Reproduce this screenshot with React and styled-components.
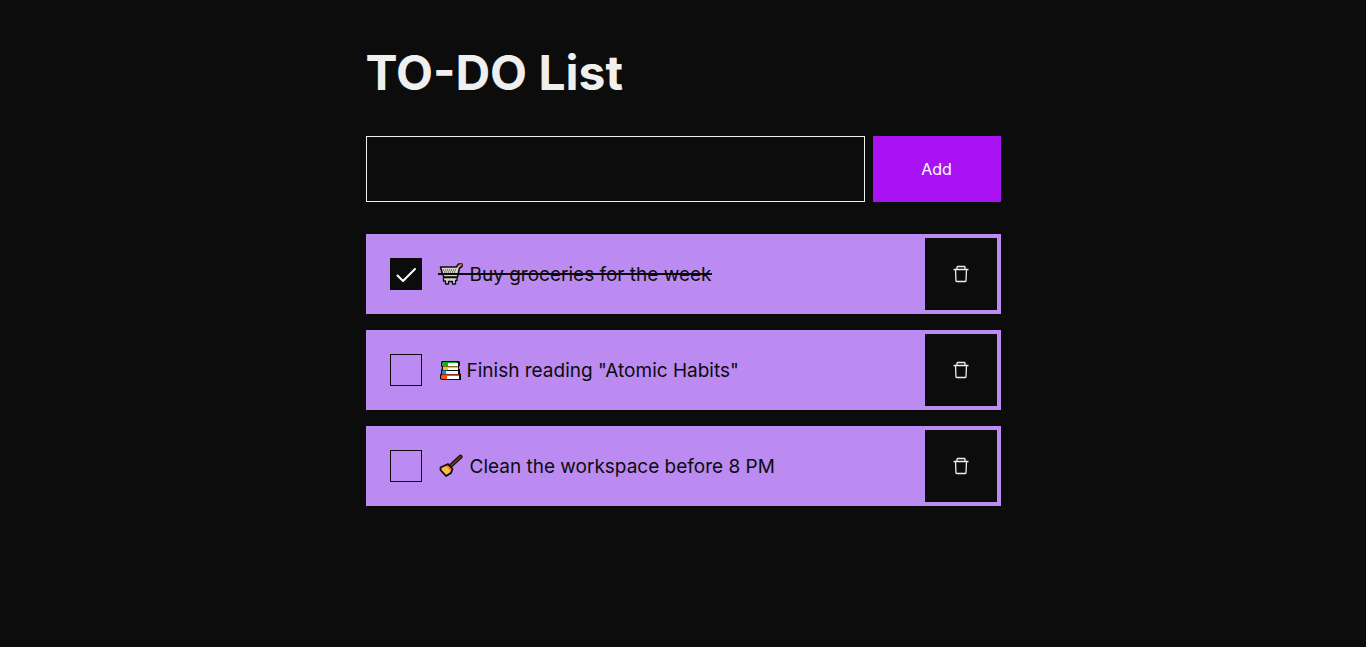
import React, { useState } from "react";
import styled, { createGlobalStyle } from "styled-components";

const GlobalStyle = createGlobalStyle`
  *, *::before, *::after { box-sizing: border-box; }
  body {
    margin: 0;
    background: #0c0c0c;
    color: #efefef;
    font-family: Inter, "Liberation Sans", sans-serif;
  }
  button, input { font: inherit; }
`;

const Page = styled.main`
  width: 100%;
  max-width: 635px;
  margin: 0 auto;
  padding: 43px 0 32px;
`;

const Title = styled.h1`
  margin: 0 0 33px;
  font-size: 48px;
  line-height: 60px;
  font-weight: 700;
`;

const AddForm = styled.form`
  display: flex;
  gap: 8px;
  margin-bottom: 32px;
`;

const TextField = styled.input`
  flex: 1;
  min-width: 0;
  height: 66px;
  padding: 0 24px;
  border: 1px solid #efefef;
  border-radius: 0;
  background: transparent;
  color: #efefef;
  font-size: 19px;
`;

const AddButton = styled.button`
  width: 128px;
  border: 0;
  background: #a913f3;
  color: #ffffff;
  font-size: 16px;
  cursor: pointer;
`;

const List = styled.ul`
  display: flex;
  flex-direction: column;
  gap: 16px;
  margin: 0;
  padding: 0;
  list-style: none;
`;

const Item = styled.li`
  display: flex;
  align-items: center;
  padding: 4px 4px 4px 24px;
  background: #bb8bf1;
  color: #0c0c0c;
`;

const TaskLabel = styled.label`
  flex: 1;
  display: flex;
  align-items: center;
  gap: 16px;
  cursor: pointer;
`;

const CheckWrap = styled.span`
  display: grid;
  width: 32px;
  height: 32px;
  > * { grid-area: 1 / 1; }
`;

const Checkbox = styled.input`
  appearance: none;
  width: 32px;
  height: 32px;
  margin: 0;
  border: 1px solid #0c0c0c;
  cursor: pointer;
  &:checked { background: #0c0c0c; }
`;

const CheckMark = styled.svg`
  width: 32px;
  height: 32px;
  pointer-events: none;
`;

const TaskText = styled.span`
  position: relative;
  display: flex;
  align-items: center;
  gap: 4px;
  font-size: 19px;
  line-height: 25px;
  &::after {
    content: "";
    display: ${(p) => (p.$done ? "block" : "none")};
    position: absolute;
    top: 11px;
    left: 0;
    right: 0;
    height: 2px;
    background: #0c0c0c;
  }
`;

const Pictogram = styled.svg`
  flex: none;
  width: ${(p) => p.$width}px;
  height: 24px;
`;

const DeleteButton = styled.button`
  display: grid;
  place-items: center;
  width: 72px;
  height: 72px;
  padding: 0;
  border: 0;
  background: #0c0c0c;
  color: #efefef;
  cursor: pointer;
`;

const Cart = () => (
  <Pictogram $width={28} viewBox="0 0 28 24" aria-hidden="true">
    <path d="M2.5 5H18.5L20.5 2H24V4.5L21.5 6L19.5 15H6L4.5 12Z" fill="#d8d4cc" stroke="#0c0c0c" strokeWidth="1.6" strokeLinejoin="round" />
    <path d="M5 8H18M6 10H17" stroke="#333" strokeWidth="1" strokeDasharray="1 1" />
    <path d="M5.5 15.5H19V18.5H17.5V22H14.5V19.5H10.5V22H7.5V19H5.5Z" fill="#d8d4cc" stroke="#0c0c0c" strokeWidth="1.3" strokeLinejoin="round" />
    <path d="M21.5 3.5L23 3" stroke="#ff4b3e" strokeWidth="2" strokeLinecap="round" />
  </Pictogram>
);

const Books = () => (
  <Pictogram $width={25} viewBox="0 0 25 24" aria-hidden="true">
    <path d="M4 3H21L22 4V8H21V11H22V15L23 16V22H4L2 21V17L3 15V12L4 10L3 8V4Z" fill="#0c0c0c" />
    <path d="M5 4H19V5H10V8H4V5Z" fill="#12b31c" />
    <path d="M10 5H20V8H10Z" fill="#ffffff" />
    <path d="M5 8.5H20V10H10V12H5Z" fill="#e9c622" />
    <path d="M10 10H20V12H10Z" fill="#fff8df" />
    <path d="M4 12.5H9V16H4Z" fill="#1688e5" />
    <path d="M8 13H20V16H8Z" fill="#eaf6ff" />
    <path d="M4 16.5H21V18H10V21H4L3 20V18Z" fill="#ff4d0a" />
    <path d="M9 18H21V21H9Z" fill="#ffffff" />
  </Pictogram>
);

const Broom = () => (
  <Pictogram $width={28} viewBox="0 0 28 24" aria-hidden="true">
    <path d="M13 11.5L22.5 2.8" stroke="#0c0c0c" strokeWidth="4.2" strokeLinecap="round" />
    <path d="M13 11.5L22.5 2.8" stroke="#6d391e" strokeWidth="1.8" strokeLinecap="round" />
    <path d="M10 10L14.5 15L13 19L8 22L2.5 16V13.5Z" fill="#f8b03e" stroke="#0c0c0c" strokeWidth="1.8" strokeLinejoin="round" />
    <path d="M9 11.5L13 16" stroke="#f36b2b" strokeWidth="1.3" />
    <path d="M5 15L9 19M7 13.5L11 17.5" stroke="#ffd477" strokeWidth="1" />
  </Pictogram>
);

const TrashIcon = () => (
  <svg width="16" height="18" viewBox="0 0 16 18" fill="none" stroke="currentColor" strokeWidth="1.3" aria-hidden="true">
    <path d="M0.5 4.5H15.5M4 4.5V2.2Q4 1.5 4.7 1.5H11.3Q12 1.5 12 2.2V4.5M2.5 4.5L3 15.8Q3 16.5 3.7 16.5H12.3Q13 16.5 13 15.8L13.5 4.5" />
  </svg>
);

const initialTasks = [
  { id: 1, icon: Cart, text: "Buy groceries for the week", done: true },
  { id: 2, icon: Books, text: 'Finish reading "Atomic Habits"', done: false },
  { id: 3, icon: Broom, text: "Clean the workspace before 8 PM", done: false },
];

export default function App() {
  const [tasks, setTasks] = useState(initialTasks);
  const [draft, setDraft] = useState("");

  const addTask = (event) => {
    event.preventDefault();
    const text = draft.trim();
    if (!text) return;
    setTasks([...tasks, { id: Date.now(), text, done: false }]);
    setDraft("");
  };
  const toggle = (id) =>
    setTasks(tasks.map((t) => (t.id === id ? { ...t, done: !t.done } : t)));
  const remove = (id) => setTasks(tasks.filter((t) => t.id !== id));

  return (
    <>
      <GlobalStyle />
      <Page>
        <Title>TO-DO List</Title>
        <AddForm onSubmit={addTask}>
          <TextField aria-label="New task" value={draft} onChange={(e) => setDraft(e.target.value)} />
          <AddButton type="submit">Add</AddButton>
        </AddForm>
        <List>
          {tasks.map(({ id, icon: Icon, text, done }) => (
            <Item key={id}>
              <TaskLabel>
                <CheckWrap>
                  <Checkbox type="checkbox" checked={done} onChange={() => toggle(id)} />
                  {done && (
                    <CheckMark viewBox="0 0 32 32" fill="none" stroke="#ffffff" strokeWidth="2" strokeLinecap="round" strokeLinejoin="round" aria-hidden="true">
                      <path d="M7.5 17.5L13 23L25 11" />
                    </CheckMark>
                  )}
                </CheckWrap>
                <TaskText $done={done}>
                  {Icon && <Icon />}
                  {text}
                </TaskText>
              </TaskLabel>
              <DeleteButton type="button" aria-label={`Delete ${text}`} onClick={() => remove(id)}>
                <TrashIcon />
              </DeleteButton>
            </Item>
          ))}
        </List>
      </Page>
    </>
  );
}
